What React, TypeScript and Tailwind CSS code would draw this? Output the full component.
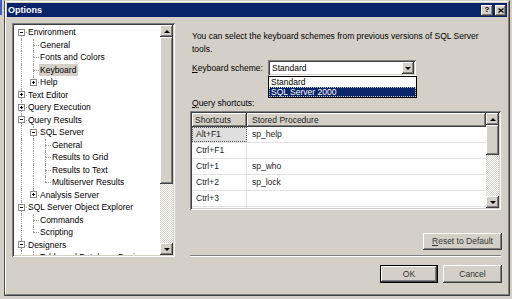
const RAISED =
  'shadow-[inset_-1px_-1px_0_#404040,inset_1px_1px_0_#ffffff,inset_-2px_-2px_0_#808080,inset_2px_2px_0_#d4d0c8]';
const SUNKEN =
  'shadow-[inset_1px_1px_0_#808080,inset_-1px_-1px_0_#ffffff,inset_2px_2px_0_#404040,inset_-2px_-2px_0_#d4d0c8]';
const CHECKER =
  'bg-[image:repeating-conic-gradient(#ffffff_0%_25%,#d4d0c8_0%_50%)] bg-[length:2px_2px]';

type TreeRow = {
  level: number;
  label: string;
  exp?: '+' | '-';
  first?: boolean;
  last?: boolean;
  sel?: boolean;
};

const tree: TreeRow[] = [
  { level: 1, label: 'Environment', exp: '-', first: true },
  { level: 2, label: 'General' },
  { level: 2, label: 'Fonts and Colors' },
  { level: 2, label: 'Keyboard', sel: true },
  { level: 2, label: 'Help', exp: '+', last: true },
  { level: 1, label: 'Text Editor', exp: '+' },
  { level: 1, label: 'Query Execution', exp: '+' },
  { level: 1, label: 'Query Results', exp: '-' },
  { level: 2, label: 'SQL Server', exp: '-' },
  { level: 3, label: 'General' },
  { level: 3, label: 'Results to Grid' },
  { level: 3, label: 'Results to Text' },
  { level: 3, label: 'Multiserver Results', last: true },
  { level: 2, label: 'Analysis Server', exp: '+', last: true },
  { level: 1, label: 'SQL Server Object Explorer', exp: '-' },
  { level: 2, label: 'Commands' },
  { level: 2, label: 'Scripting', last: true },
  { level: 1, label: 'Designers', exp: '-' },
  { level: 2, label: 'Table and Database Designers' },
];

const shortcuts = [
  ['Alt+F1', 'sp_help'],
  ['Ctrl+F1', ''],
  ['Ctrl+1', 'sp_who'],
  ['Ctrl+2', 'sp_lock'],
  ['Ctrl+3', ''],
  ['', ''],
];

function Arrow({ dir }: { dir: 'up' | 'down' }) {
  return (
    <svg width="6" height="3" viewBox="0 0 6 3">
      <polygon points={dir === 'up' ? '3,0 6,3 0,3' : '0,0 6,0 3,3'} fill="#000" />
    </svg>
  );
}

function ScrollBtn({ dir }: { dir: 'up' | 'down' }) {
  return (
    <div className={`h-[12px] shrink-0 bg-[#d4d0c8] ${RAISED} flex items-center justify-center`}>
      <Arrow dir={dir} />
    </div>
  );
}

function Expander({ kind }: { kind: '+' | '-' }) {
  return (
    <div className="absolute left-[3px] top-[calc(50%-3.5px)] w-[7px] h-[7px] border border-[#8c8c8c] bg-white">
      <div className="absolute left-[1px] top-[2px] w-[3px] h-px bg-black" />
      {kind === '+' && <div className="absolute left-[2px] top-[1px] w-px h-[3px] bg-black" />}
    </div>
  );
}

function TreeItem({ row }: { row: TreeRow }) {
  const ancestors = Array.from({ length: row.level - 1 });
  return (
    <div className="flex h-[12.5px] items-center">
      {ancestors.map((_, i) => (
        <div key={i} className="relative w-[12px] h-full shrink-0">
          <div className="absolute left-[6px] top-0 bottom-0 border-l border-dotted border-[#a0a0a0]" />
        </div>
      ))}
      <div className="relative w-[12px] h-full shrink-0">
        {!row.first && (
          <div className="absolute left-[6px] top-0 h-1/2 border-l border-dotted border-[#a0a0a0]" />
        )}
        {!row.last && (
          <div className="absolute left-[6px] top-1/2 bottom-0 border-l border-dotted border-[#a0a0a0]" />
        )}
        <div className="absolute left-[6px] right-0 top-1/2 border-t border-dotted border-[#a0a0a0]" />
        {row.exp && <Expander kind={row.exp} />}
      </div>
      <span
        className={`pl-[1px] pr-[2px] leading-[12px] whitespace-nowrap ${row.sel ? 'bg-[#d4d0c8]' : ''}`}
      >
        {row.label}
      </span>
    </div>
  );
}

function Button({ children, w, def }: { children: React.ReactNode; w: string; def?: boolean }) {
  return (
    <div className={`${w} h-full ${def ? 'border border-black' : ''}`}>
      <div className={`h-full bg-[#d4d0c8] ${RAISED} flex items-center justify-center text-[#333]`}>
        {children}
      </div>
    </div>
  );
}

export default function App() {
  return (
    <div className="w-[512px] h-[299px] bg-[#d4d0c8] flex overflow-hidden font-['Liberation_Sans',Arial,sans-serif] text-[8.5px] text-black">
      <div className="w-[4px] shrink-0">
        <div className="h-[15px] w-[2px] bg-[#3a5fcd]" />
      </div>

      {/* dialog frame */}
      <div className="w-[506px] h-[296px] shrink-0 border border-t-[#d4d0c8] border-l-[#505050] border-r-[#404040] border-b-[#404040]">
        <div className="h-full border border-t-white border-l-white border-r-[#808080] border-b-[#808080] p-px flex flex-col">
          {/* title bar */}
          <div className="h-[14px] shrink-0 bg-[#0a246a] flex items-center pl-px pr-px">
            <span className="text-white font-bold text-[9px] leading-none">Options</span>
            <div className="ml-auto flex gap-[2px]">
              <div
                className={`w-[12px] h-[11px] bg-[#d4d0c8] ${RAISED} flex items-center justify-center font-bold text-[8px] leading-none`}
              >
                ?
              </div>
              <div className={`w-[11px] h-[11px] bg-[#d4d0c8] ${RAISED} flex items-center justify-center`}>
                <svg width="6" height="5" viewBox="0 0 6 5">
                  <path d="M0.5 0.5 L5.5 4.5 M5.5 0.5 L0.5 4.5" stroke="#000" strokeWidth="1.3" />
                </svg>
              </div>
            </div>
          </div>

          <div className="flex pt-[6px]">
            {/* tree */}
            <div className={`ml-[5px] w-[163px] h-[234px] shrink-0 bg-white ${SUNKEN} p-[2px] flex`}>
              <div className="w-[146px] h-full overflow-hidden pl-px pt-px">
                {tree.map((r, i) => (
                  <TreeItem key={i} row={r} />
                ))}
              </div>
              <div className="w-[13px] h-full flex flex-col">
                <ScrollBtn dir="up" />
                <div className={`h-[147px] shrink-0 bg-[#d4d0c8] ${RAISED}`} />
                <div className={`flex-1 ${CHECKER}`} />
                <ScrollBtn dir="down" />
              </div>
            </div>

            {/* right panel */}
            <div className="ml-[15px] w-[312px] flex flex-col">
              <p className="mt-[6.5px] pl-[2px] leading-[13px]">
                You can select the keyboard schemes from previous versions of SQL Server
                <br />
                tools.
              </p>

              <div className="mt-[4.5px] flex items-center h-[16px]">
                <span className="w-[78px] pl-[2px] shrink-0">
                  <span className="underline">K</span>eyboard scheme:
                </span>
                <div className="relative w-[148px] h-full">
                  <div className={`h-full bg-white ${SUNKEN} p-[2px] flex items-center`}>
                    <span className="pl-[2px] flex-1">Standard</span>
                    <div className={`w-[12px] h-full bg-[#d4d0c8] ${RAISED} flex items-center justify-center`}>
                      <Arrow dir="down" />
                    </div>
                  </div>
                  <div className="absolute left-0 top-[16px] w-[149px] h-[22px] z-10 bg-white border border-black">
                    <div className="h-[10px] leading-[10px] pl-[2px]">Standard</div>
                    <div className="h-[10px] leading-[10px] pl-[2px] bg-[#0a246a] text-white outline outline-dotted outline-[#d4d0c8] -outline-offset-1">
                      SQL Server 2000
                    </div>
                  </div>
                </div>
              </div>

              <div className="mt-[21px] pl-[2px] leading-[13px]">
                <span className="underline">Q</span>uery shortcuts:
              </div>

              {/* shortcuts grid */}
              <div className={`mt-px w-[311px] h-[99px] bg-white ${SUNKEN} p-[2px] flex`}>
                <div className="flex-1 h-full overflow-hidden text-[#222]">
                  <div className="flex h-[14px]">
                    <div className={`w-[55px] bg-[#d4d0c8] ${RAISED} pl-[3px] flex items-center`}>Shortcuts</div>
                    <div className={`flex-1 bg-[#d4d0c8] ${RAISED} pl-[5px] flex items-center`}>
                      Stored Procedure
                    </div>
                  </div>
                  {shortcuts.map(([k, p], i) => (
                    <div key={i} className="flex h-[16px] border-b border-[#e2e2e2]">
                      <div
                        className={`w-[55px] border-r border-[#e2e2e2] pl-[4px] flex items-center ${
                          i === 0 ? 'bg-[#dedede] outline outline-dotted outline-[#555] -outline-offset-1' : ''
                        }`}
                      >
                        {k}
                      </div>
                      <div className="flex-1 pl-[5px] flex items-center">{p}</div>
                    </div>
                  ))}
                </div>
                <div className="w-[13px] h-full flex flex-col">
                  <ScrollBtn dir="up" />
                  <div className={`h-[30px] shrink-0 bg-[#d4d0c8] ${RAISED}`} />
                  <div className={`flex-1 ${CHECKER}`} />
                  <ScrollBtn dir="down" />
                </div>
              </div>

              <div className="mt-[23px] h-[17px] flex justify-end">
                <Button w="w-[79px]">
                  <span>
                    <span className="underline">R</span>eset to Default
                  </span>
                </Button>
              </div>

              <div className="mt-[5px] w-[311px] h-[2px] border-t border-[#808080] border-b border-b-white" />

              <div className="mt-[8px] h-[18px] flex justify-end gap-[5px]">
                <Button w="w-[58px]" def>
                  OK
                </Button>
                <Button w="w-[59px]">Cancel</Button>
              </div>
            </div>
          </div>
        </div>
      </div>
    </div>
  );
}
